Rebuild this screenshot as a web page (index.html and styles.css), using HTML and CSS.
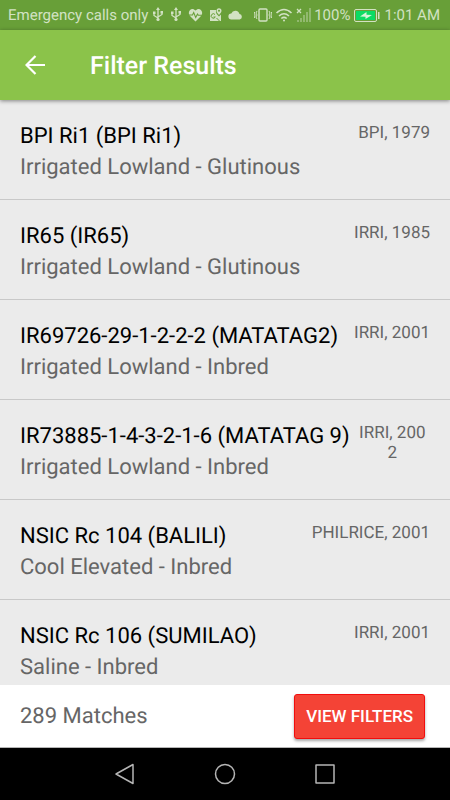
FILE: index.html
```html
<!DOCTYPE html>
<html lang="en">
<head>
<meta charset="utf-8">
<meta name="viewport" content="width=device-width, initial-scale=1">
<title>Filter Results</title>
<link rel="stylesheet" href="styles.css">
</head>
<body>
<div class="status">
  <span class="carrier">Emergency calls only</span>
  <svg class="usb" width="12" height="16" viewBox="0 0 12 16"><path d="M6 2v10M2 6v2.500l4 2.500M10 5v2.500l-4 2.500" fill="none" stroke="currentColor" stroke-width="1.300"/><path d="M6 0l2 3H4zM1 4.500h2.500V7H1zM8.500 4H11v2.500H8.500z" fill="currentColor"/><circle cx="6" cy="12.500" r="1.600" fill="currentColor"/></svg>
  <svg class="usb" width="12" height="16" viewBox="0 0 12 16"><path d="M6 2v10M2 6v2.500l4 2.500M10 5v2.500l-4 2.500" fill="none" stroke="currentColor" stroke-width="1.300"/><path d="M6 0l2 3H4zM1 4.500h2.500V7H1zM8.500 4H11v2.500H8.500z" fill="currentColor"/><circle cx="6" cy="12.500" r="1.600" fill="currentColor"/></svg>
  <svg width="15" height="14" viewBox="0 0 14 14"><path d="M7 13.500L1.500 8C-2 4 3-2 7 2.500 11-2 16 4 12.500 8z" fill="currentColor"/><path d="M0 7h4l1.200-2.500 2 5L9 6l.8 1.200H14" fill="none" stroke="#689f38" stroke-width="1.100"/></svg>
  <svg width="13" height="14" viewBox="0 0 13 14"><path d="M1 2h6c-.5 3 1 4.500 3 6.500l2-2V13H1z" fill="currentColor"/><path d="M10 7C8.500 5 7.500 4 7.500 2.700a2.500 2.500 0 0 1 5 0C12.500 4 11.500 5 10 7z" fill="currentColor"/><circle cx="10" cy="2.700" r="1" fill="#689f38"/><path d="M6 6.500A2.200 2.200 0 1 0 6.300 9H4.500M7.500 10l3 3" fill="none" stroke="#689f38"/></svg>
  <svg width="15" height="12" viewBox="0 0 15 12"><path d="M3.500 10.500a3 3 0 0 1-.2-6A4.300 4.300 0 0 1 11.500 5a2.800 2.800 0 0 1 .2 5.500z" fill="currentColor"/></svg>
  <span class="system">
    <svg width="18" height="14" viewBox="0 0 18 14" fill="none" stroke="currentColor"><rect x="5" y="1" width="8" height="12" rx="1" stroke-width="1.400"/><path d="M3 3L2 5l1 2-1 2 1 2M15 3l1 2-1 2 1 2-1 2M.5 4v1.500L1 7l-.5 3M17.500 4v1.500L17 7l.5 3"/></svg>
    <svg width="18" height="14" viewBox="0 0 18 14" fill="none" stroke="currentColor" stroke-width="1.600"><path d="M1.500 5Q9-2 16.500 5M4 8q5-4.500 10 0M6.300 10.500q2.700-2.300 5.400 0"/><circle cx="9" cy="12.500" r="1" fill="currentColor" stroke="none"/></svg>
    <svg width="15" height="14" viewBox="0 0 15 14"><path d="M1 1l4 4M5 1L1 5" stroke="currentColor" stroke-width="1.300"/><path d="M1 12h2v2H1zM4 10h2v4H4zM7 7h2v7H7zM10 4h2v10h-2zM13 0h2v14h-2z" fill="currentColor" opacity=".4"/></svg>
    <span>100%</span>
    <svg class="battery" width="26" height="13" viewBox="0 0 26 13"><rect x=".5" y=".5" width="22" height="12" rx="1.500" fill="none" stroke="currentColor"/><rect x="2" y="2" width="19" height="9" fill="#0bdc64"/><path d="M24 3h1.500v7H24z" fill="currentColor"/><path d="M6 7.500L12.500 3v2.700l5.500.4L11.500 10V7.800z" fill="#d5f5d9"/></svg>
    <span>1:01 AM</span>
  </span>
</div>
<header class="bar">
  <button class="back" aria-label="Back"><svg width="20" height="20" viewBox="0 0 20 20" fill="none" stroke="currentColor" stroke-width="2.200"><path d="M20 10H2M10.500 1L1.500 10l9 9"/></svg></button>
  <h1>Filter Results</h1>
</header>
<main class="list">
  <article class="row"><div class="info"><h2>BPI Ri1 (BPI Ri1)</h2><p>Irrigated Lowland - Glutinous</p></div><span class="meta">BPI, 1979</span></article>
  <article class="row"><div class="info"><h2>IR65 (IR65)</h2><p>Irrigated Lowland - Glutinous</p></div><span class="meta">IRRI, 1985</span></article>
  <article class="row"><div class="info"><h2>IR69726-29-1-2-2-2 (MATATAG2)</h2><p>Irrigated Lowland - Inbred</p></div><span class="meta">IRRI, 2001</span></article>
  <article class="row"><div class="info"><h2>IR73885-1-4-3-2-1-6 (MATATAG 9)</h2><p>Irrigated Lowland - Inbred</p></div><span class="meta">IRRI, 2002</span></article>
  <article class="row"><div class="info"><h2>NSIC Rc 104 (BALILI)</h2><p>Cool Elevated - Inbred</p></div><span class="meta">PHILRICE, 2001</span></article>
  <article class="row"><div class="info"><h2>NSIC Rc 106 (SUMILAO)</h2><p>Saline - Inbred</p></div><span class="meta">IRRI, 2001</span></article>
</main>
<footer class="footer">
  <span class="count">289 Matches</span>
  <button class="filters">VIEW FILTERS</button>
</footer>
<nav class="nav" aria-label="System">
  <button aria-label="Back"><svg width="22" height="22" viewBox="0 0 22 22"><path d="M19 1.500v19L2 11z"/></svg></button>
  <button aria-label="Home"><svg width="22" height="22" viewBox="0 0 22 22"><circle cx="11" cy="11" r="9.500"/></svg></button>
  <button aria-label="Recent apps"><svg width="22" height="22" viewBox="0 0 22 22"><rect x="2" y="2" width="18" height="18"/></svg></button>
</nav>
</body>
</html>
```
FILE: styles.css
```css
* { box-sizing: border-box; }
body {
  margin: 0;
  height: 100vh;
  display: flex;
  flex-direction: column;
  overflow: hidden;
  font-family: Roboto, "Liberation Sans", sans-serif;
  text-rendering: geometricPrecision;
  background: #ebebeb;
}
h1, h2, p { margin: 0; }
button { border: 0; padding: 0; font: inherit; background: none; }
svg { display: block; flex: none; }
.status {
  flex: none;
  height: 30px;
  padding: 0 10px 0 8px;
  display: flex;
  align-items: center;
  gap: 6px;
  background: #689f38;
  color: #d2e2c3;
  font-size: 15px;
  white-space: nowrap;
}
.carrier { margin-right: -2px; }
.system { display: flex; align-items: center; gap: 3px; margin-left: auto; }
.battery { margin: 0 1px; }
.bar {
  flex: none;
  height: 70px;
  padding: 0 20px;
  display: flex;
  align-items: center;
  background: #8bc34a;
  color: #fff;
  box-shadow: 0 1px 4px rgba(0, 0, 0, .45);
  z-index: 1;
}
.back { width: 30px; height: 40px; display: grid; place-items: center; color: inherit; }
h1 { margin-left: 40px; padding-top: 3px; font-size: 25px; font-weight: 500; line-height: 30px; }
.list { flex: 1; min-height: 0; overflow: hidden; }
.row {
  min-height: 100px;
  padding: 21px 20px 16px;
  display: flex;
  align-items: flex-start;
  justify-content: space-between;
  border-bottom: 1px solid #c8c8c8;
}
.info { flex: none; padding-right: 5px; }
h2, .row p { font-size: 22px; font-weight: 400; line-height: 31px; white-space: nowrap; }
h2 { color: #000; }
.row p, .count { color: #666; }
.meta {
  min-width: 0;
  padding-top: 2px;
  font-size: 17px;
  line-height: 20px;
  text-align: center;
  word-break: break-all;
  color: #666;
}
.footer {
  flex: none;
  height: 63px;
  padding: 0 25px 0 20px;
  display: flex;
  align-items: center;
  justify-content: space-between;
  background: #fff;
  border-bottom: 1px solid #b5b5b5;
}
.count { font-size: 22px; }
.filters {
  height: 45px;
  padding: 0 11px;
  border: 1px solid #f20d0d;
  border-radius: 3px;
  background: #f44336;
  color: #fff;
  font-size: 17px;
  font-weight: 500;
  box-shadow: 0 2px 3px rgba(0, 0, 0, .35);
}
.nav {
  flex: none;
  height: 52px;
  display: flex;
  align-items: center;
  justify-content: center;
  background: #000;
}
.nav button { width: 100px; height: 52px; display: grid; place-items: center; }
.nav svg { fill: none; stroke: #b5b5b5; stroke-width: 1.5px; stroke-linejoin: round; }
```
